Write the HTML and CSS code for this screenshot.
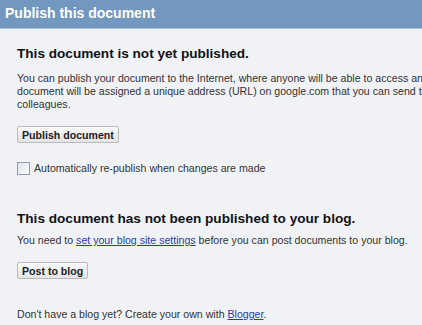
FILE: index.html
```html
<!DOCTYPE html>
<html lang="en">
<head>
    <meta charset="UTF-8">
    <title>Publish this document</title>
    <link rel="stylesheet" href="styles.css">
</head>
<body>
<!-- Header -->
<div class="dialog-header">Publish this document</div>

<div class="dialog-body">
    <!-- Publish to web -->
    <div class="section">
        <h2>This document is not yet published.</h2>
        <p class="desc">You can publish your document to the Internet, where anyone will be able to access and view it. Your published document will be assigned a unique address (URL) on google.com that you can send to friends, family and colleagues.</p>
        <button class="btn">Publish document</button>
        <label class="check-row">
            <span class="check-box"></span>
            Automatically re-publish when changes are made
        </label>
    </div>

    <!-- Publish to blog -->
    <div class="section blog-section">
        <h2>This document has not been published to your blog.</h2>
        <p class="desc">You need to <a href="#">set your blog site settings</a> before you can post documents to your blog.</p>
        <button class="btn">Post to blog</button>
        <p class="desc footer-note">Don't have a blog yet? Create your own with <a href="#">Blogger</a>.</p>
    </div>
</div>
</body>
</html>
```

FILE: styles.css
```css
/* General Styles */
body {
    font-family: "Liberation Sans", Arial, sans-serif;
    background-color: #f1f2f6;
    margin: 0;
    padding: 0;
    color: #222;
    overflow: hidden;
}

/* Header */
.dialog-header {
    background-color: #7298c0;
    color: #ffffff;
    font-weight: bold;
    font-size: 14px;
    height: 28px;
    line-height: 26px;
    padding-left: 5px;
    border-bottom: 1px solid #a9bfd8;
    white-space: nowrap;
}

/* Body */
.dialog-body {
    padding: 16px 0 0 17px;
    width: 560px;
}

.section h2 {
    font-size: 13.6px;
    font-weight: bold;
    color: #111;
    margin: 0 0 9px 0;
    line-height: 18px;
}

.desc {
    font-size: 10.6px;
    line-height: 13px;
    margin: 0 0 15px 0;
    color: #333;
    width: 540px;
}

.desc a {
    color: #2a39a8;
}

.btn {
    font-family: "Liberation Sans", Arial, sans-serif;
    font-size: 10.6px;
    font-weight: bold;
    color: #222;
    background: linear-gradient(#fafafa, #e4e4e4);
    border: 1px solid #bababa;
    border-radius: 2px;
    height: 17px;
    padding: 0 4px;
    margin: 0;
    display: block;
}

.check-row {
    display: flex;
    align-items: center;
    gap: 4px;
    font-size: 10.6px;
    line-height: 13px;
    color: #333;
    margin-top: 19px;
}

.check-box {
    width: 11px;
    height: 11px;
    border: 1px solid #8c9cb3;
    background: linear-gradient(135deg, #dde2ea, #ffffff);
}

.blog-section {
    margin-top: 35px;
}

.blog-section h2 {
    margin-bottom: 6px;
}

.footer-note {
    margin-top: 29px;
}
```
